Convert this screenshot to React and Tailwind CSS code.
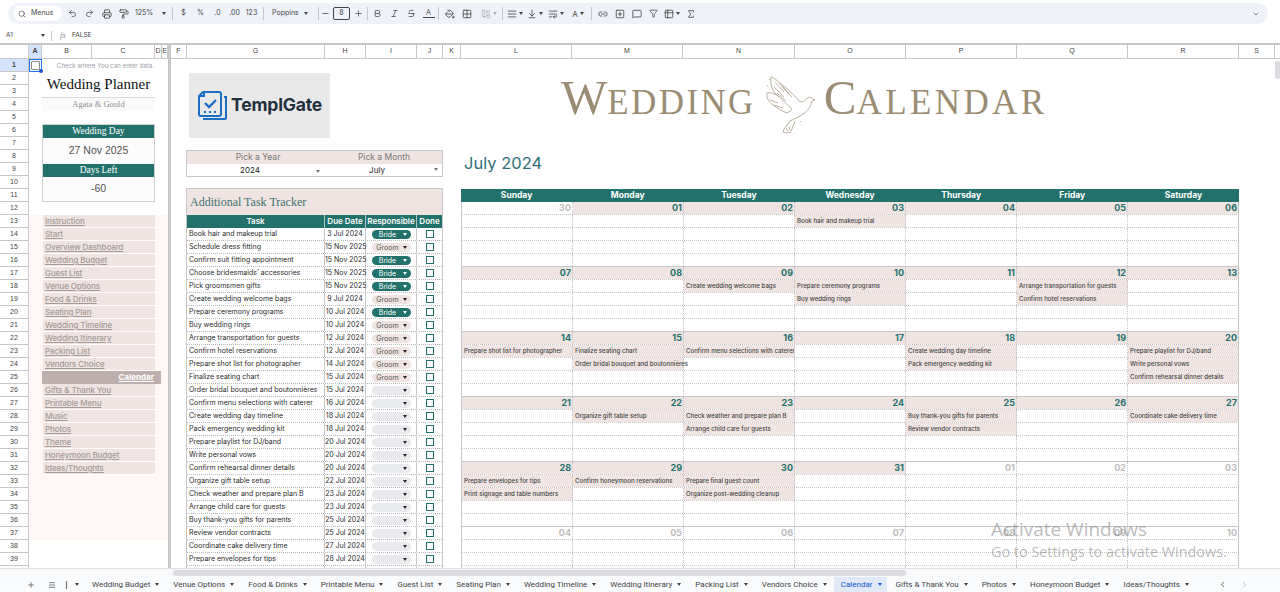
import {
  Search, Undo2, Redo2, Printer, PaintRoller, Bold, Italic, Strikethrough, PaintBucket, Grid2x2, Combine,
  AlignJustify, ArrowDownToLine, WrapText, Link2, SquarePlus, MessageSquare, Funnel, Table2, Sigma,
  ChevronDown, ChevronLeft, ChevronRight, Plus, Minus, Menu,
} from 'lucide-react';

const teal = 'bg-[#23716c]';
const COLS = [
  ['A', 'w-[13px] bg-[#d3e3fd] font-bold'], ['B', 'w-[50px]'], ['C', 'w-[63px]'], ['D', 'w-[7px]'], ['E', 'w-[6px]'],
];
const COLS2 = [
  ['F', 'w-[16px]'], ['G', 'w-[138px]'], ['H', 'w-[41px]'], ['I', 'w-[51px]'], ['J', 'w-[26px]'], ['K', 'w-[18px]'],
  ['L', 'w-[111px]'], ['M', 'w-[111px]'], ['N', 'w-[112px]'], ['O', 'w-[111px]'], ['P', 'w-[111px]'], ['Q', 'w-[111px]'],
  ['R', 'w-[111px]'], ['S', 'w-[36px]'],
];

const NAV = [
  'Instruction', 'Start', 'Overview Dashboard', 'Wedding Budget', 'Guest List', 'Venue Options', 'Food & Drinks',
  'Seating Plan', 'Wedding Timeline', 'Wedding Itinerary', 'Packing List', 'Vendors Choice', 'Calendar',
  'Gifts & Thank You', 'Printable Menu', 'Music', 'Photos', 'Theme', 'Honeymoon Budget', 'Ideas/Thoughts',
];

const TASKS = [
  ['Book hair and makeup trial', '3 Jul 2024', 'Bride'],
  ['Schedule dress fitting', '15 Nov 2025', 'Groom'],
  ['Confirm suit fitting appointment', '15 Nov 2025', 'Bride'],
  ['Choose bridesmaids’ accessories', '15 Nov 2025', 'Bride'],
  ['Pick groomsmen gifts', '15 Nov 2025', 'Bride'],
  ['Create wedding welcome bags', '9 Jul 2024', 'Groom'],
  ['Prepare ceremony programs', '10 Jul 2024', 'Bride'],
  ['Buy wedding rings', '10 Jul 2024', 'Groom'],
  ['Arrange transportation for guests', '12 Jul 2024', 'Groom'],
  ['Confirm hotel reservations', '12 Jul 2024', 'Groom'],
  ['Prepare shot list for photographer', '14 Jul 2024', 'Groom'],
  ['Finalize seating chart', '15 Jul 2024', 'Groom'],
  ['Order bridal bouquet and boutonnières', '15 Jul 2024', ''],
  ['Confirm menu selections with caterer', '16 Jul 2024', ''],
  ['Create wedding day timeline', '18 Jul 2024', ''],
  ['Pack emergency wedding kit', '18 Jul 2024', ''],
  ['Prepare playlist for DJ/band', '20 Jul 2024', ''],
  ['Write personal vows', '20 Jul 2024', ''],
  ['Confirm rehearsal dinner details', '20 Jul 2024', ''],
  ['Organize gift table setup', '22 Jul 2024', ''],
  ['Check weather and prepare plan B', '23 Jul 2024', ''],
  ['Arrange child care for guests', '23 Jul 2024', ''],
  ['Buy thank-you gifts for parents', '25 Jul 2024', ''],
  ['Review vendor contracts', '25 Jul 2024', ''],
  ['Coordinate cake delivery time', '27 Jul 2024', ''],
  ['Prepare envelopes for tips', '28 Jul 2024', ''],
  ['', '', ''],
];

const WEEKS = [
  [['30', 1], ['01'], ['02'], ['03', 0, ['Book hair and makeup trial']], ['04'], ['05'], ['06']],
  [['07'], ['08'], ['09', 0, ['Create wedding welcome bags']], ['10', 0, ['Prepare ceremony programs', 'Buy wedding rings']], ['11'],
    ['12', 0, ['Arrange transportation for guests', 'Confirm hotel reservations']], ['13']],
  [['14', 0, ['Prepare shot list for photographer']], ['15', 0, ['Finalize seating chart', 'Order bridal bouquet and boutonnières']],
    ['16', 0, ['Confirm menu selections with caterer']], ['17'], ['18', 0, ['Create wedding day timeline', 'Pack emergency wedding kit']], ['19'],
    ['20', 0, ['Prepare playlist for DJ/band', 'Write personal vows', 'Confirm rehearsal dinner details']]],
  [['21'], ['22', 0, ['Organize gift table setup']], ['23', 0, ['Check weather and prepare plan B', 'Arrange child care for guests']], ['24'],
    ['25', 0, ['Buy thank-you gifts for parents', 'Review vendor contracts']], ['26'], ['27', 0, ['Coordinate cake delivery time']]],
  [['28', 0, ['Prepare envelopes for tips', 'Print signage and table numbers']], ['29', 0, ['Confirm honeymoon reservations']],
    ['30', 0, ['Prepare final guest count', 'Organize post-wedding cleanup']], ['31'], ['01', 1], ['02', 1], ['03', 1]],
  [['04', 1], ['05', 1], ['06', 1], ['07', 1], ['08', 1], ['09', 1], ['10', 1]],
];

const TABS = [
  'Wedding Budget', 'Venue Options', 'Food & Drinks', 'Printable Menu', 'Guest List', 'Seating Plan', 'Wedding Timeline',
  'Wedding Itinerary', 'Packing List', 'Vendors Choice', 'Calendar', 'Gifts & Thank You', 'Photos', 'Honeymoon Budget', 'Ideas/Thoughts',
];

function Caret({ className = 'border-t-[#444]' }) {
  return <span className={`inline-block w-0 h-0 shrink-0 border-x-[2.5px] border-x-transparent border-t-[3px] ${className}`} />;
}

function Tool({ icon: Icon, size = 10, caret, children, className = 'w-[17px]' }) {
  return (
    <span className={`flex items-center justify-center gap-[2px] shrink-0 text-[#444] text-[7px] ${className}`}>
      {Icon ? <Icon size={size} strokeWidth={2} /> : children}
      {caret && <Caret />}
    </span>
  );
}

function Sep({ className = 'mx-[3px]' }) {
  return <span className={`w-px h-[13px] bg-[#c7c7c7] shrink-0 ${className}`} />;
}

function Toolbar() {
  return (
    <div className="h-[28px] pt-[3px] px-[8px]">
      <div className="h-[21px] w-[1260px] rounded-full bg-[#eff3f9] flex items-center pl-[5px]">
        <div className="w-[49px] h-[15px] rounded-full bg-white flex items-center pl-[5px] gap-[5px] text-[7px] text-[#444] shrink-0 mr-[2px]">
          <Search size={8} /> Menus
        </div>
        <Tool icon={Undo2} size={9} />
        <Tool icon={Redo2} size={9} />
        <Tool icon={Printer} />
        <Tool icon={PaintRoller} />
        <span className="w-[31px] ml-[3px] text-[7px] text-[#444] flex items-center justify-between shrink-0">125% <Caret /></span>
        <Sep className="ml-[6px] mr-[2px]" />
        <Tool>$</Tool>
        <Tool>%</Tool>
        <Tool>.0</Tool>
        <Tool>.00</Tool>
        <Tool>123</Tool>
        <Sep className="ml-[3px] mr-[8px]" />
        <span className="w-[36px] text-[7px] text-[#444] flex items-center justify-between shrink-0">Poppins <Caret /></span>
        <Sep className="ml-[10px] mr-0" />
        <Tool icon={Minus} size={9} className="w-[13px]" />
        <span className="w-[17px] h-[13px] ml-[1px] rounded-[2px] border border-[#444] flex items-center justify-center text-[7px] text-[#333] shrink-0">8</span>
        <Tool icon={Plus} size={9} className="w-[16px]" />
        <Sep className="mx-[1px]" />
        <Tool icon={Bold} size={9} />
        <Tool icon={Italic} size={9} />
        <Tool icon={Strikethrough} size={9} />
        <span className="w-[17px] flex flex-col items-center shrink-0 text-[7px] leading-[8px] text-[#444]">
          A<span className="w-[12px] h-[1.5px] bg-[#444]" />
        </span>
        <Sep className="ml-[1px] mr-[2px]" />
        <Tool icon={PaintBucket} />
        <Tool icon={Grid2x2} />
        <Tool icon={Combine} caret className="w-[27px] opacity-40" />
        <Sep className="ml-0 mr-[2px]" />
        <Tool icon={AlignJustify} caret className="w-[20px]" />
        <Tool icon={ArrowDownToLine} caret className="w-[20px]" />
        <Tool icon={WrapText} caret className="w-[22px]" />
        <Tool caret className="w-[22px]"><span className="text-[8px]">A</span></Tool>
        <Sep className="mx-[2px]" />
        <Tool icon={Link2} />
        <Tool icon={SquarePlus} />
        <Tool icon={MessageSquare} />
        <Tool icon={Funnel} size={9} />
        <Tool icon={Table2} caret className="w-[20px]" />
        <Tool icon={Sigma} />
        <span className="ml-auto mr-[8px] text-[#444]"><ChevronDown size={8} /></span>
      </div>
    </div>
  );
}

function FormulaBar() {
  return (
    <div className="h-[15px] flex items-center text-[6.5px] text-[#444]">
      <span className="w-[41px] pl-[6px]">A1</span>
      <Caret />
      <span className="w-px h-[10px] bg-[#c7c7c7] ml-[6px] mr-[8px]" />
      <span className="italic text-[#888] font-['Liberation_Serif'] text-[8px] w-[12px]">fx</span>
      <span>FALSE</span>
    </div>
  );
}

function ColHeader() {
  const cell = 'h-full flex items-center justify-center border-r border-[#c7c7c7] shrink-0';
  return (
    <div className="h-[16px] flex border-y border-[#c7c7c7] border-t-2 text-[7px] text-[#444] font-['Liberation_Sans',sans-serif]">
      <div className={`${cell} w-[29px] bg-white`} />
      {COLS.map(([n, c]) => <div key={n} className={`${cell} ${c}`}>{n}</div>)}
      <div className="w-[3px] bg-[#c7c7c7] shrink-0" />
      {COLS2.map(([n, c]) => <div key={n} className={`${cell} ${c}`}>{n}</div>)}
    </div>
  );
}

function RowHeader() {
  const rows = Array.from({ length: 40 }, (_, i) => i + 1);
  return (
    <div className="w-[29px] shrink-0 border-r border-[#c7c7c7] text-[7px] text-[#444] font-['Liberation_Sans',sans-serif]">
      {rows.map((n) => (
        <div key={n} className={`h-[13px] flex items-center justify-center border-b border-[#c7c7c7] ${n === 1 ? 'bg-[#d3e3fd] font-bold' : ''}`}>{n < 40 ? n : ''}</div>
      ))}
    </div>
  );
}

function FrozenPane() {
  return (
    <div className="w-[139px] shrink-0 h-full flex flex-col">
      <div className="h-[13px] flex">
        <div className="w-[13px] relative border border-[#1a73e8] flex items-center justify-center shrink-0">
          <span className="w-[9px] h-[9px] border border-[#8a8a8a] rounded-[1px]" />
          <span className="absolute -right-[2px] -bottom-[2px] w-[4px] h-[4px] rounded-full bg-[#1a56d0]" />
        </div>
        <div className="w-[113px] text-right text-[6.2px] leading-[13px] text-[#9aa0a6] pr-[1px] whitespace-nowrap">Check where You can enter data.</div>
      </div>
      <div className="h-[26px] ml-[13px] w-[113px] border-b border-[#d9d9d9] flex items-center justify-center font-['Liberation_Serif',serif] text-[15px] text-[#111] whitespace-nowrap">
        Wedding Planner
      </div>
      <div className="h-[13px] ml-[13px] w-[113px] bg-[#fafafa] flex items-center justify-center font-['Liberation_Serif',serif] text-[8.5px] text-[#8f8f8f]">
        Agata &amp; Gould
      </div>
      <div className="h-[13px]" />
      <div className="h-[78px] ml-[13px] w-[113px] border border-[#d0d0d0] bg-[#fcfcfc] flex flex-col text-center shrink-0">
        <div className={`h-[13px] ${teal} text-white font-['Liberation_Serif',serif] text-[9.5px] leading-[12px]`}>Wedding Day</div>
        <div className="h-[26px] flex items-center justify-center text-[10.5px] text-[#555] font-['Liberation_Sans',sans-serif]">27 Nov 2025</div>
        <div className={`h-[13px] ${teal} text-white font-['Liberation_Serif',serif] text-[9.5px] leading-[12px]`}>Days Left</div>
        <div className="h-[24px] flex items-center justify-center text-[10.5px] text-[#555] font-['Liberation_Sans',sans-serif]">-60</div>
      </div>
      <div className="h-[13px]" />
      <div className="h-[325px] bg-[#fff7f5] ml-px shrink-0">
        {NAV.map((n) => n === 'Calendar' ? (
          <div key={n} className="h-[13px] ml-[12px] w-[119px] bg-[#bdb0ac] text-right pr-[7px] text-[8px] leading-[12px] font-bold text-white underline">{n}</div>
        ) : (
          <div key={n} className="h-[13px] ml-[13px] w-[112px] bg-[#efe4e1] border-b border-white pl-[2px] text-[8px] leading-[12px] font-medium tracking-[-0.1px] text-[#a39a97] underline whitespace-nowrap">{n}</div>
        ))}
      </div>
    </div>
  );
}

function Logo() {
  return (
    <div className="ml-[3px] mt-[14px] w-[141px] h-[65px] shrink-0 bg-[#e9e9ea] flex items-center pl-[7px] gap-[3px]">
      <svg width="32" height="31" viewBox="0 0 32 31" fill="none" stroke="#1c6dc4" strokeWidth="2">
        <path d="M3 23V6l4-4h16a2 2 0 0 1 2 2v20a2 2 0 0 1-2 2H5a2 2 0 0 1-2-2z" />
        <path d="M28 7h2v21a1 1 0 0 1-1 1H8v-1" />
        <path d="M8 2v4H3" />
        <path d="M9 13l4 4 7-7" strokeWidth="2.4" />
        <path d="M8 22h2M13 22h2M18 22h2" />
      </svg>
      <span className="font-bold text-[17.6px] text-[#22303e] tracking-[-0.2px]">TemplGate</span>
    </div>
  );
}

function Picker() {
  return (
    <div className="mt-[12px] h-[27px] shrink-0 border border-[#c7c7c7] flex flex-col text-[8px]">
      <div className="h-[13px] bg-[#efe4e1] flex text-[#777] text-center leading-[13px] text-[8.5px]">
        <span className="w-[142px]">Pick a Year</span>
        <span className="flex-1 pr-[3px]">Pick a Month</span>
      </div>
      <div className="h-[12px] pb-px flex items-center text-[#222] text-center">
        <span className="w-[126px]">2024</span>
        <span className="ml-[3px]"><Caret className="border-t-[#777]" /></span>
        <span className="w-[114px]">July</span>
        <Caret className="border-t-[#777]" />
      </div>
    </div>
  );
}

function Chip({ who }) {
  const tone = who === 'Bride' ? 'bg-[#23716c] text-white' : who === 'Groom' ? 'bg-[#efe4e1] text-[#555]' : 'bg-[#e8eaed]';
  const caret = who === 'Bride' ? 'border-t-white' : 'border-t-[#222]';
  return (
    <span className={`w-[39px] h-[9px] rounded-full flex items-center justify-end pr-[4px] relative text-[7px] ${tone}`}>
      <span className="absolute left-[2px] right-[9px] text-center leading-[9px]">{who}</span>
      <Caret className={caret} />
    </span>
  );
}

function Tracker() {
  return (
    <div className="mt-[11px] shrink-0 border-x border-t border-[#c7c7c7]">
      <div className="h-[26px] bg-[#efe4e1] flex items-center pl-[3px] font-['Liberation_Serif',serif] text-[12px] text-[#3d706d]">
        Additional Task Tracker
      </div>
      <div className={`h-[13px] flex ${teal} text-white text-[8px] font-semibold text-center leading-[13px]`}>
        <span className="w-[138px] border-r border-white/60">Task</span>
        <span className="w-[41px] border-r border-white/60 whitespace-nowrap">Due Date</span>
        <span className="w-[51px] border-r border-white/60 whitespace-nowrap">Responsible</span>
        <span className="flex-1">Done</span>
      </div>
      {TASKS.map(([t, d, w]) => (
        <div key={t} className="h-[13px] flex border-b border-dotted border-[#b9b9b9] text-[7px] text-[#2b2b2b]">
          <span className="w-[138px] pl-[2px] border-r border-[#c7c7c7] leading-[12px] whitespace-nowrap overflow-hidden">{t}</span>
          <span className="w-[41px] border-r border-[#c7c7c7] leading-[12px] text-center whitespace-nowrap">{d}</span>
          <span className="w-[51px] border-r border-[#c7c7c7] flex items-center justify-center"><Chip who={w} /></span>
          <span className="flex-1 flex items-center justify-center">
            <span className="w-[8px] h-[8px] border border-[#23716c]" />
          </span>
        </div>
      ))}
    </div>
  );
}

function Dove() {
  return (
    <svg width="60" height="60" viewBox="0 0 60 60" fill="none" stroke="#a89c86" strokeWidth="0.8" className="shrink-0 mt-px">
      <path d="M9 3c4 1 9 6 14 10s10 9 14 14" />
      <path d="M9 3c-1 7 1 14 6 18s9 9 15 14" />
      <path d="M13 8l9 10M17 9l10 11M12 13l10 10M20 12l10 11M15 19l9 8" />
      <path d="M37 27c3 2 6 0 8-3 2-1 5-1 6 1l2 1-3 1c-1 5-4 10-9 13-4 3-9 5-13 7" />
      <path d="M5 19c-1 5 2 9 6 12s9 6 14 8l5-3" />
      <path d="M5 19c4-1 9 1 12 4M8 26l8 3M12 31l9 3" />
      <path d="M28 47l-6 8-1 3 3 1 2-1 2 1 2-4 3-8" />
      <path d="M24 54l2 3M27 53l1 3" />
      <path d="M7 5l1 1M5 12l1 0M38 47l1 1" />
    </svg>
  );
}

function Calendar() {
  const heads = ['Sunday', 'Monday', 'Tuesday', 'Wednesday', 'Thursday', 'Friday', 'Saturday'];
  return (
    <div className="w-[778px] shrink-0 h-full overflow-hidden">
      <div className="h-[92px] pl-[100px] pt-[14px] flex items-start font-['Liberation_Serif',serif] text-[#9a8c73]">
        <span className="whitespace-nowrap">
          <span className="text-[49px] leading-none">W</span>
          <span className="text-[35px] leading-none tracking-[2.4px]">EDDING</span>
        </span>
        <span className="w-[6px] shrink-0" />
        <Dove />
        <span className="whitespace-nowrap ml-[2px]">
          <span className="text-[49px] leading-none">C</span>
          <span className="text-[35px] leading-none tracking-[3.4px]">ALENDAR</span>
        </span>
      </div>
      <div className="h-[38px] pl-[3px] text-[16.5px] leading-[24px] text-[#2f6f77]">July 2024</div>
      <div className={`h-[13px] grid grid-cols-7 ${teal} text-white text-[8.5px] font-bold text-center leading-[13px]`}>
        {heads.map((h) => <span key={h}>{h}</span>)}
      </div>
      {WEEKS.map((week, i) => (
        <div key={i} className={`border-l border-[#c7c7c7] ${i ? 'border-t border-t-[#c7c7c7]' : ''}`}>
          <div className="h-[13px] grid grid-cols-7 border-b border-dotted border-[#c4c4c4]">
            {week.map(([d, muted], k) => (
              <span key={k} className={`text-right pr-px text-[9px] font-bold leading-[12px] border-r border-dotted border-[#c4c4c4] last:border-solid ${muted ? 'text-[#bdbdbd]' : 'bg-[#efe4e1] text-[#23716c]'}`}>{d}</span>
            ))}
          </div>
          {[0, 1, 2, 3].map((r) => (
            <div key={r} className={`grid grid-cols-7 border-b border-dotted border-[#c4c4c4] ${r === 3 ? 'h-[12px] border-b-0' : 'h-[13px]'}`}>
              {week.map(([, , events], k) => {
                const text = events && events[r];
                const spill = text && text.startsWith('Order bridal');
                return (
                  <span key={k} className={`pl-[2px] text-[6.1px] font-medium leading-[12px] text-[#444] whitespace-nowrap border-r border-dotted border-[#c4c4c4] last:border-solid last:border-[#c7c7c7] ${text ? 'bg-[#efe4e1]' : ''} ${spill ? 'overflow-visible' : 'overflow-hidden'}`}>{text}</span>
                );
              })}
            </div>
          ))}
        </div>
      ))}
    </div>
  );
}

function Sheet() {
  return (
    <div className="h-[509px] flex overflow-hidden">
      <RowHeader />
      <FrozenPane />
      <div className="w-[3px] bg-[#c7c7c7] shrink-0" />
      <div className="w-[15px] shrink-0" />
      <div className="w-[257px] shrink-0 flex flex-col overflow-hidden">
        <Logo />
        <Picker />
        <Tracker />
      </div>
      <div className="w-[18px] shrink-0" />
      <Calendar />
      <div className="flex-1 flex justify-end">
        <div className="w-[5px] h-[18px] mt-[2px] bg-[#dadce0] rounded-[2px]" />
      </div>
    </div>
  );
}

function TabBar() {
  return (
    <div className="h-[15px] bg-[#f9fbfd] flex items-center text-[8px] text-[#444] font-['Roboto',sans-serif]">
      <span className="w-[40px] pl-[27px] shrink-0"><Plus size={8} /></span>
      <span className="w-[19px] pl-[8px] shrink-0"><Menu size={8} /></span>
      <span className="w-[26px] flex items-center gap-[8px] pl-[7px] shrink-0">
        <span className="w-px h-[8px] bg-[#666]" /><Caret />
      </span>
      {TABS.map((t) => (
        <span key={t} className={`h-full flex items-center gap-[5px] pl-[7px] pr-[5px] mr-[2px] whitespace-nowrap shrink-0 ${t === 'Calendar' ? 'bg-[#e1e9f7] text-[#0b57d0]' : ''}`}>
          {t}
          <Caret className={t === 'Calendar' ? 'border-t-[#0b57d0]' : 'border-t-[#444]'} />
        </span>
      ))}
      <span className="ml-[22px] shrink-0"><ChevronLeft size={9} /></span>
      <span className="ml-[13px] shrink-0 opacity-40"><ChevronRight size={9} /></span>
    </div>
  );
}

export default function App() {
  return (
    <div className="relative w-[1280px] h-[592px] overflow-hidden bg-white font-['Inter',sans-serif]">
      <Toolbar />
      <FormulaBar />
      <ColHeader />
      <Sheet />
      <div className="h-[9px] flex items-center bg-[#f8f9fa] border-t border-[#e0e0e0]">
        <div className="ml-[173px] w-[733px] h-[6px] rounded-full bg-[#dadce0]" />
      </div>
      <TabBar />
      <div className="absolute left-[991px] top-[520px] text-[#777]/50 font-['Open_Sans',sans-serif] pointer-events-none leading-none">
        <div className="text-[19px] mb-[6px]">Activate Windows</div>
        <div className="text-[14.4px]">Go to Settings to activate Windows.</div>
      </div>
    </div>
  );
}
